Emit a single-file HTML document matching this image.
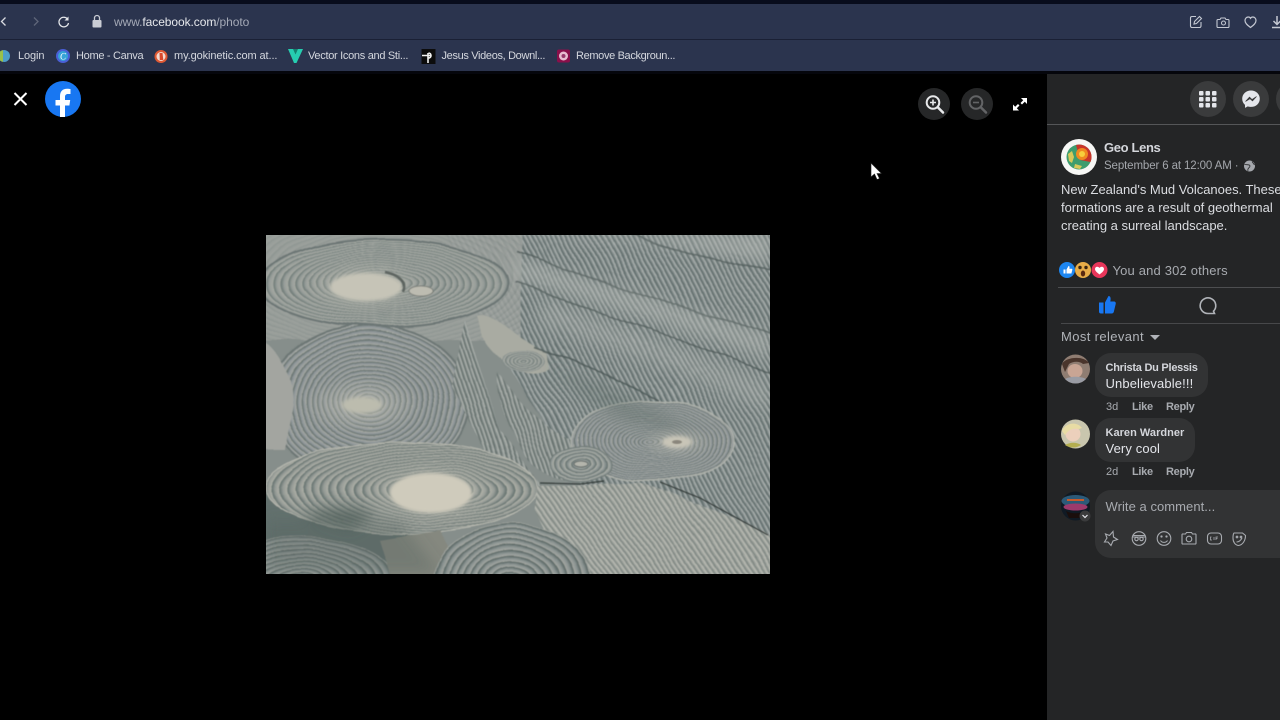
<!DOCTYPE html>
<html lang="en"><head><meta charset="utf-8"><title>Facebook photo</title>
<style>
html,body{margin:0;padding:0;background:#000;width:1280px;height:720px;overflow:hidden}
body{position:relative;font-family:"Liberation Sans",sans-serif}
#w{position:absolute;left:0;top:0;width:1280px;height:720px;overflow:hidden;filter:blur(.35px)}
.a{position:absolute;white-space:nowrap}
.t{position:absolute;white-space:nowrap;line-height:1}
svg{position:absolute;overflow:visible}
.bm{font-size:11px;color:#d4d7de;top:51px;letter-spacing:-.3px}
.bub{position:absolute;background:#323334;border-radius:16px}
</style></head><body><div id="w">

<div class="a" style="left:0;top:0;width:1280px;height:4px;background:#080c1c"></div>
<div class="a" style="left:0;top:4px;width:1280px;height:35px;background:#2b344e"></div>
<div class="a" style="left:0;top:39px;width:1280px;height:1px;background:#1a2035"></div>
<div class="a" style="left:0;top:40px;width:1280px;height:31px;background:#2b344e"></div>
<div class="a" style="left:0;top:71px;width:1280px;height:3px;background:#05060c"></div>

<svg style="left:0;top:0" width="300" height="40" fill="none">
<path d="M5.5 17.5L1.5 21.5L5.5 25.5" stroke="#d8dae0" stroke-width="1.3"/>
<path d="M34 17.5L38 21.5L34 25.5" stroke="#5f6679" stroke-width="1.3"/>
<path d="M67.5 19A4.8 4.8 0 1 0 68.5 23" stroke="#e4e6ea" stroke-width="1.3"/>
<path d="M68.5 16.5V20.5H64.5Z" fill="#e4e6ea"/>
<rect x="92.5" y="20" width="9" height="7.5" rx="1" fill="#c9ccd4"/>
<path d="M94.5 20V18a2.5 2.5 0 0 1 5 0V20" stroke="#c9ccd4" stroke-width="1.3"/>
</svg>
<div class="t" style="left:114px;top:15.5px;font-size:12px;color:#a4a9b6;letter-spacing:-.07px">www.<span style="color:#e6e8ec">facebook.com</span>/photo</div>

<svg style="left:1185px;top:12px" width="95" height="20" fill="none" stroke="#c4c8d2" stroke-width="1.1">
<path d="M11 4.5H7a1.5 1.5 0 0 0-1.500 1.500v8A1.500 1.500 0 0 0 7 15.500h7.500a1.500 1.500 0 0 0 1.500-1.500V10"/>
<path d="M9 12l.5-2.500L14.500 4.500l2 2L11.500 11.500Z"/>
<path d="M33 7.500H35l1-1.500h4l1 1.500h2a1 1 0 0 1 1 1v6a1 1 0 0 1-1 1H33a1 1 0 0 1-1-1v-6a1 1 0 0 1 1-1Z"/>
<circle cx="38.500" cy="11" r="2"/>
<path d="M65.500 15.500C62 12.800 60 11 60 8.500 60 6.500 61.500 5 63.300 5c1 0 1.800.5 2.200 1.300C66 5.500 66.800 5 67.800 5 69.600 5 71 6.500 71 8.500c0 2.500-2 4.300-5.500 7Z" stroke-width="1.200"/>
<path d="M92 4v8M88.500 9l3.500 3.500L95.500 9M87 15.500H96" stroke-width="1.500"/>
</svg>

<svg style="left:0;top:44px" width="680" height="24">
<circle cx="4" cy="12" r="6" fill="#4d9fc9"/><path d="M3 6.100a6 6 0 0 0 0 11.800Z" fill="#9ac14a"/>
<circle cx="63" cy="12" r="7" fill="#4a5fd6"/><circle cx="63" cy="12" r="5" fill="#36a3d8"/>
<text x="60" y="15.500" font-size="9" font-style="italic" fill="#fff" font-family="Liberation Serif">C</text>
<circle cx="161" cy="12.500" r="6.500" fill="#de5833"/><circle cx="161" cy="12.500" r="4.500" fill="#f3d9cf"/><path d="M159.500 9h3l.8 7h-3.500Z" fill="#d9482b"/>
<path d="M288 5H303L296.500 19H294Z" fill="#26cdb0"/><path d="M293 5H298L295.500 10.500Z" fill="#14806f"/>
<rect x="421.500" y="5" width="14" height="15" fill="#0c0c0c"/>
<path d="M422 11.500H431.500M428.500 9a2.500 2.500 0 1 1 0 5M428 9V19" stroke="#f2f2f2" stroke-width="1.600" fill="none"/>
<rect x="557" y="5.500" width="13" height="13" rx="2" fill="#8a0f4a"/><circle cx="563.500" cy="12" r="4.500" fill="#e8bcd0"/><circle cx="563.500" cy="12" r="2" fill="#96386a"/>
</svg>
<div class="t bm" style="left:18px;letter-spacing:-.1px">Login</div>
<div class="t bm" style="left:76px">Home - Canva</div>
<div class="t bm" style="left:174px;letter-spacing:-.1px">my.gokinetic.com at...</div>
<div class="t bm" style="left:308px">Vector Icons and Sti...</div>
<div class="t bm" style="left:441.500px;letter-spacing:-.34px">Jesus Videos, Downl...</div>
<div class="t bm" style="left:576px;letter-spacing:-.35px">Remove Backgroun...</div>

<svg style="left:0;top:74px" width="100" height="50" fill="none">
<path d="M14.500 19L26.500 31M26.500 19L14.500 31" stroke="#fff" stroke-width="2"/>
<circle cx="63" cy="25" r="18" fill="#1877f2"/>
<path d="M60 43V31.500H55.500V26H60V22c0-4.800 2.800-7.300 7-7.300 1.600 0 3 .2 3.500.3V20h-2.500c-2.200 0-3 1.200-3 3V26h5.200l-.8 5.500h-4.400V43Z" fill="#fff"/>
</svg>

<svg style="left:0;top:0" width="1280" height="720" fill="none">
<circle cx="934" cy="104" r="16" fill="#262728"/>
<circle cx="933" cy="102.500" r="6.300" stroke="#e8e9eb" stroke-width="2"/>
<path d="M938 107.500L943 112.500" stroke="#e8e9eb" stroke-width="2.500" stroke-linecap="round"/>
<path d="M930 102.500H936M933 99.500V105.500" stroke="#e8e9eb" stroke-width="1.600"/>
<circle cx="977" cy="104" r="16" fill="#262728"/>
<circle cx="976" cy="102.500" r="6.300" stroke="#636466" stroke-width="2"/>
<path d="M981 107.500L986 112.500" stroke="#636466" stroke-width="2.500" stroke-linecap="round"/>
<path d="M973 102.500H979" stroke="#636466" stroke-width="1.600"/>
<path d="M1021 98H1027V104L1024.800 101.800L1022 104.500L1020.500 103L1023.200 100.200Z" fill="#fff"/>
<path d="M1019 110.500H1013V104.500L1015.200 106.700L1018 104L1019.500 105.500L1016.800 108.300Z" fill="#fff"/>
</svg>

<!-- photo -->
<svg style="left:266px;top:235px;overflow:hidden" width="504" height="339" viewBox="266 235 504 339">
<defs>
<radialGradient id="r1" r=".028" spreadMethod="repeat"><stop offset="0" stop-color="#a3a7a1"/><stop offset=".45" stop-color="#979d99"/><stop offset=".75" stop-color="#7a8582"/><stop offset=".9" stop-color="#727d79"/><stop offset="1" stop-color="#b4b7ae"/></radialGradient>
<radialGradient id="r2" r=".027" spreadMethod="repeat"><stop offset="0" stop-color="#a0a4a0"/><stop offset=".45" stop-color="#90979a"/><stop offset=".75" stop-color="#707b79"/><stop offset=".9" stop-color="#687370"/><stop offset="1" stop-color="#b6b8b0"/></radialGradient>
<radialGradient id="r3" r=".045" spreadMethod="repeat"><stop offset="0" stop-color="#a0a4a0"/><stop offset=".45" stop-color="#899290"/><stop offset=".75" stop-color="#667270"/><stop offset=".9" stop-color="#5e6a67"/><stop offset="1" stop-color="#b2b5ac"/></radialGradient>
<radialGradient id="r3b" r=".09" spreadMethod="repeat"><stop offset="0" stop-color="#a4a8a3"/><stop offset=".4" stop-color="#899290"/><stop offset=".7" stop-color="#667270"/><stop offset="1" stop-color="#b6b9b0"/></radialGradient>
<radialGradient id="r4" r=".03" fx=".62" fy=".52" cx=".62" cy=".52" spreadMethod="repeat"><stop offset="0" stop-color="#aaaca4"/><stop offset=".45" stop-color="#949a95"/><stop offset=".75" stop-color="#727d7a"/><stop offset=".9" stop-color="#6a7773"/><stop offset="1" stop-color="#bcbdb3"/></radialGradient>
<radialGradient id="g"><stop offset="0" stop-color="#cfccbf" stop-opacity=".55"/><stop offset=".6" stop-color="#c4c4b8" stop-opacity=".2"/><stop offset="1" stop-color="#c4c4b8" stop-opacity="0"/></radialGradient>
<pattern id="s1" width="4.500" height="4.500" patternUnits="userSpaceOnUse" patternTransform="rotate(62)"><rect width="4.500" height="4.500" fill="#818b8a"/><rect width="4.500" height="1.200" fill="#a8aeac"/><rect y="2.500" width="4.500" height="1.300" fill="#626e6d"/></pattern>
<pattern id="s2" width="4" height="4" patternUnits="userSpaceOnUse" patternTransform="rotate(72)"><rect width="4" height="4" fill="#858e8c"/><rect width="4" height="1.200" fill="#abb0ab"/><rect y="2.300" width="4" height="1.100" fill="#646f6b"/></pattern>
<pattern id="s3" width="3.500" height="4.500" patternUnits="userSpaceOnUse" patternTransform="rotate(55)"><rect width="3.500" height="4.500" fill="#9ca19b"/><rect width="3.500" height="1.300" fill="#b6b8b0"/><rect y="2.600" width="3.500" height="1.100" fill="#7c8480"/></pattern>
<filter id="wp" filterUnits="userSpaceOnUse" x="236" y="205" width="564" height="399"><feTurbulence type="fractalNoise" baseFrequency=".018" numOctaves="2" seed="4" result="n"/><feDisplacementMap in="SourceGraphic" in2="n" scale="8" xChannelSelector="R" yChannelSelector="G"/><feGaussianBlur stdDeviation=".5"/></filter>
<filter id="b1" x="-10%" y="-10%" width="120%" height="120%"><feGaussianBlur stdDeviation=".5"/></filter>
<filter id="b2" x="-30%" y="-30%" width="160%" height="160%"><feGaussianBlur stdDeviation="1.500"/></filter>
<filter id="b5" x="-30%" y="-30%" width="160%" height="160%"><feGaussianBlur stdDeviation="7"/></filter>
</defs>
<rect x="266" y="235" width="504" height="339" fill="#868e8b"/>
<g filter="url(#wp)">
<path d="M440 215H800V604H660L560 450L475 310Z" fill="url(#s1)"/>
<path d="M246 215H520L520 340H246Z" fill="url(#r1)" opacity=".6"/>
<rect x="246" y="215" width="274" height="125" fill="#a0a4a0" opacity=".55"/>
<ellipse cx="370" cy="402" rx="100" ry="78" fill="url(#r2)" stroke="#6d7775" stroke-width="2"/>
<path d="M246 330C276 340 297 375 291 410L286 450L246 450Z" fill="#a3a5a0"/>
<ellipse cx="384" cy="283" rx="124" ry="44" fill="url(#r1)" stroke="#6c7674" stroke-width="2"/>
<path d="M246 480L420 535L480 604H246Z" fill="#64716e"/>
<ellipse cx="300" cy="580" rx="95" ry="42" fill="url(#r3)"/>
<path d="M466 320L500 430L545 490L505 490L452 385Z" fill="url(#s2)"/>
<path d="M478 316C490 310 510 335 548 352L550 368C525 380 495 360 482 335Z" fill="#a9aba2"/>
<path d="M497 372C520 400 545 440 600 450L608 475C565 488 535 475 522 450C505 420 495 395 497 372Z" fill="url(#s2)"/>
<path d="M733 440L800 470V550L700 492L650 482Z" fill="url(#s1)"/>
<ellipse cx="652" cy="441" rx="82" ry="40" fill="url(#r2)" stroke="#b4b7af"/>
<ellipse cx="581" cy="464" rx="30" ry="17" fill="url(#r3b)" stroke="#717b78"/>
<ellipse cx="524" cy="360" rx="22" ry="10" fill="url(#r3b)" opacity=".85"/>
<ellipse cx="402" cy="488" rx="136" ry="46" fill="url(#r4)" stroke="#b8b9b0"/>
<path d="M380 540L440 530L480 604H400Z" fill="#85887f"/>
<path d="M538 486L637 482L677 495L800 550V604H593L545 530L535 510Z" fill="url(#s3)"/>
<ellipse cx="512" cy="580" rx="78" ry="56" fill="url(#r3)"/>
<g stroke="#4a5655" stroke-width="1.800" fill="none" opacity=".75">
<path d="M515 252C575 273 662 300 790 340"/>
<path d="M515 283C582 307 665 333 790 380"/>
<path d="M625 230C675 253 720 262 790 272"/>
<path d="M535 347C582 363 620 380 660 400"/>
</g>
</g>
<g filter="url(#b5)">
<path d="M480 235H770V262L640 240Z" fill="#b8bcb8" opacity=".5"/>
<path d="M515 258L660 300L770 335L770 358L660 322L515 278Z" fill="#b6bab6" opacity=".45"/>
<path d="M540 300L660 340L770 385L770 410L660 365L540 325Z" fill="#b6bab6" opacity=".3"/>
<path d="M300 515C330 505 360 505 375 515L350 530Z" fill="#4a5855" opacity=".7"/>
<path d="M266 520H400L440 574H266Z" fill="#55645f" opacity=".35"/>
<path d="M545 365L660 410L700 440L620 420Z" fill="#55625f" opacity=".3"/>
</g>
<ellipse cx="365" cy="287" rx="62" ry="28" fill="url(#g)"/>
<ellipse cx="362" cy="405" rx="62" ry="30" fill="url(#g)"/>
<ellipse cx="430" cy="493" rx="72" ry="34" fill="url(#g)"/>
<ellipse cx="677" cy="442" rx="38" ry="17" fill="url(#g)"/>
<g filter="url(#b2)">
<ellipse cx="366" cy="287" rx="36" ry="14" fill="#c6c4b7"/>
<ellipse cx="362" cy="405" rx="20" ry="8" fill="#bcbcae"/>
<ellipse cx="431" cy="493" rx="41" ry="20" fill="#cfcbbc"/>
<ellipse cx="677" cy="442" rx="15" ry="6" fill="#c8c5b7"/>
</g>
<path d="M385 272C400 275 407 283 403 292" stroke="#4f5653" stroke-width="2.500" fill="none" opacity=".8" filter="url(#b1)"/>
<ellipse cx="421" cy="291" rx="12" ry="5" fill="#bdbcb1" stroke="#7b7f79" filter="url(#b1)"/>
<path d="M540 483L580 484L604 481M660 482L700 498L768 535" stroke="#333a39" stroke-width="1.200" fill="none" filter="url(#b1)"/>
<ellipse cx="677" cy="442" rx="5" ry="2" fill="#8a867b" filter="url(#b1)"/>
<ellipse cx="581" cy="464" rx="7" ry="3" fill="#b4b5ac" stroke="#5e6866" filter="url(#b1)"/>
</svg>

<!-- cursor -->
<svg style="left:870px;top:162px" width="14" height="20"><path d="M1 1V15L4.500 12L7 17.500L9.500 16.500L7 11.500H11.500Z" fill="#fff" stroke="#222" stroke-width=".6"/></svg>

<!-- panel -->
<div class="a" style="left:1047px;top:74px;width:233px;height:646px;background:#242526;overflow:hidden">
<div class="a" style="left:0;top:50px;width:233px;height:1px;background:#555658"></div>
<div class="a" style="left:11px;top:212.500px;width:222px;height:1px;background:#4d4e50"></div>
<div class="a" style="left:14px;top:249px;width:219px;height:1px;background:#47484a"></div>
<div class="a" style="left:143px;top:7px;width:36px;height:36px;border-radius:50%;background:#3a3b3c"></div>
<div class="a" style="left:186px;top:7px;width:36px;height:36px;border-radius:50%;background:#3a3b3c"></div>
<div class="a" style="left:229px;top:7px;width:36px;height:36px;border-radius:50%;background:#3a3b3c"></div>
<svg style="left:0;top:0" width="233" height="646" fill="none">
<g fill="#e4e6eb"><rect x="152" y="17" width="4.500" height="4.500" rx="1"/><rect x="158.500" y="17" width="4.500" height="4.500" rx="1"/><rect x="165" y="17" width="4.500" height="4.500" rx="1"/><rect x="152" y="23" width="4.500" height="4.500" rx="1"/><rect x="158.500" y="23" width="4.500" height="4.500" rx="1"/><rect x="165" y="23" width="4.500" height="4.500" rx="1"/><rect x="152" y="29" width="4.500" height="4.500" rx="1"/><rect x="158.500" y="29" width="4.500" height="4.500" rx="1"/><rect x="165" y="29" width="4.500" height="4.500" rx="1"/></g>
<path d="M204 16.500c-5 0-8.800 3.600-8.800 8.300 0 2.500 1 4.600 2.800 6.100v3l2.800-1.500c1 .3 2 .5 3.200.5 5 0 8.800-3.600 8.800-8.200S209 16.500 204 16.500Z" fill="#e4e6eb"/>
<path d="M198.500 27.500L202.500 23L205 25.500L209.500 22.500L205.500 27L203 24.800Z" fill="#3a3b3c" stroke="#3a3b3c" stroke-width=".6"/>

<circle cx="32" cy="83" r="18" fill="#f7f7f5"/>
<circle cx="32" cy="83" r="12.500" fill="#3e9d6e"/>
<path d="M32 70.500a12.500 12.500 0 0 1 11.500 17.500L33 86L29 71Z" fill="#c8352a"/>
<circle cx="35" cy="80" r="6" fill="#f08a20"/><circle cx="35" cy="80" r="3" fill="#f7d03c"/>
<path d="M21 80l4-3 2 6-2 6-3-2ZM28 90l7 2-2 3-6-1Z" fill="#d8c95a"/>

<circle cx="202.500" cy="92" r="5.500" fill="#a4a7ac"/>
<path d="M197.500 90.500C200 91 203 90 203 92S200 93.500 201 97M205 87.500L207.500 91" stroke="#242526" stroke-width=".8"/>

<circle cx="20" cy="196" r="8" fill="#1d86f0"/>
<path d="M16.500 195.500h2v4h-2ZM19.500 199.500v-4l2-3.500c1 0 1.300 1 .9 2.700h2.200c.8 0 .9.800.6 1.500l-.8 3.300Z" fill="#fff"/>
<circle cx="36" cy="196" r="8" fill="#e8ad48"/>
<circle cx="33" cy="193.500" r="1.700" fill="#3a2410"/><circle cx="39" cy="193.500" r="1.700" fill="#3a2410"/><ellipse cx="36" cy="199.500" rx="2.200" ry="3" fill="#5a2a10"/>
<circle cx="52.500" cy="196" r="8" fill="#e8365a"/>
<path d="M52.500 200.500c-3-2.300-4.500-3.700-4.500-5.500 0-1.300 1-2.300 2.200-2.300.9 0 1.800.5 2.300 1.300.5-.8 1.400-1.300 2.300-1.300 1.200 0 2.200 1 2.200 2.300 0 1.800-1.500 3.200-4.500 5.500Z" fill="#fff"/>

<g transform="translate(0,2.500)"><path d="M52 226h4.500v11H54a2 2 0 0 1-2-2ZM58 237V226l3.500-6.500c2 0 2.600 2 1.800 5.500h3.700c1.500 0 2 1.200 1.700 2.500l-1.800 7.500c-.3 1.200-1 2-2.300 2Z" fill="#1877f2"/></g>
<path d="M161 239.500a7.800 7.800 0 1 1 5.500-2.300L167.500 239.500Z" stroke="#b0b3b8" stroke-width="1.600"/>
<path d="M103 261L108 266L113 261Z" fill="#b0b3b8"/>

<circle cx="28.500" cy="295" r="14.500" fill="#8f7d72"/>
<path d="M15 290c3-7 22-9 27-1l-6 1c-3-3-10-3-14 0l-4 8Z" fill="#4a352c"/>
<ellipse cx="28" cy="297" rx="7.500" ry="7" fill="#c9a594"/><path d="M18 305c5-3 16-3 21 0a14.500 14.500 0 0 1-21 0Z" fill="#9a9ca4"/>
<circle cx="28.500" cy="360" r="14.500" fill="#c9c6ae"/>
<circle cx="26" cy="360" r="7.500" fill="#ecd0bc"/><path d="M15 357c2-7 14-11 20-3l-3 1c-5-1-10 0-14 6Z" fill="#e8dca4"/><path d="M18 371c5-3 12-3 16 0a14 14 0 0 1-16 0Z" fill="#b4ae50"/>
<circle cx="28.500" cy="432" r="14.500" fill="#101a24"/>
<ellipse cx="28.500" cy="427" rx="14" ry="6" fill="#2c5a78"/>
<ellipse cx="28.500" cy="433" rx="12" ry="3.500" fill="#9c3a6c"/>
<path d="M19 437c5 3 14 3 19 0l-3 7H22Z" fill="#1a0e0c"/><path d="M20 426h17" stroke="#c85a2a" stroke-width="2"/>
<circle cx="38" cy="442" r="5.500" fill="#3a3b3c"/><path d="M35.500 441L38 443.500L40.500 441" stroke="#e4e6eb" stroke-width="1.200"/>
</svg>

<div class="t" style="left:57px;top:67px;font-size:13px;font-weight:bold;color:#d4d6db;letter-spacing:-.35px">Geo Lens</div>
<div class="t" style="left:57px;top:86.500px;font-size:11.500px;color:#a4a7ac;letter-spacing:-.12px">September 6 at 12:00 AM ·</div>
<div class="t" style="left:14px;top:108.500px;font-size:13px;color:#dbdde1;letter-spacing:-.02px">New Zealand's Mud Volcanoes. These</div>
<div class="t" style="left:14px;top:126.500px;font-size:13px;color:#dbdde1;letter-spacing:-.02px">formations are a result of geothermal</div>
<div class="t" style="left:14px;top:144.500px;font-size:13px;color:#dbdde1;letter-spacing:-.02px">creating a surreal landscape.</div>
<div class="t" style="left:65.500px;top:189.500px;font-size:13px;color:#a8abb0;letter-spacing:.17px">You and 302 others</div>
<div class="t" style="left:14px;top:256px;font-size:13px;color:#b0b3b8;letter-spacing:.38px">Most relevant</div>

<div class="bub" style="left:48px;top:279px;width:113px;height:44px"></div>
<div class="t" style="left:58.500px;top:288.500px;font-size:11px;font-weight:bold;color:#d4d6db;letter-spacing:-.25px">Christa Du Plessis</div>
<div class="t" style="left:58.500px;top:302.500px;font-size:13px;color:#e4e6eb;letter-spacing:.12px">Unbelievable!!!</div>
<div class="t" style="left:59px;top:328px;font-size:11px;color:#a8abb0">3d</div>
<div class="t" style="left:85px;top:328px;font-size:11px;font-weight:bold;color:#a8abb0;letter-spacing:-.3px">Like</div>
<div class="t" style="left:119px;top:328px;font-size:11px;font-weight:bold;color:#a8abb0;letter-spacing:-.3px">Reply</div>

<div class="bub" style="left:48px;top:344px;width:100px;height:44px"></div>
<div class="t" style="left:58.500px;top:353.500px;font-size:11px;font-weight:bold;color:#d4d6db;letter-spacing:.03px">Karen Wardner</div>
<div class="t" style="left:58.500px;top:367.500px;font-size:13px;color:#e4e6eb;letter-spacing:.12px">Very cool</div>
<div class="t" style="left:59px;top:393px;font-size:11px;color:#a8abb0">2d</div>
<div class="t" style="left:85px;top:393px;font-size:11px;font-weight:bold;color:#a8abb0;letter-spacing:-.3px">Like</div>
<div class="t" style="left:119px;top:393px;font-size:11px;font-weight:bold;color:#a8abb0;letter-spacing:-.3px">Reply</div>

<div class="bub" style="left:48px;top:416px;width:200px;height:68px"></div>
<div class="t" style="left:58.500px;top:426px;font-size:13px;color:#a8abb0;letter-spacing:.05px">Write a comment...</div>
<svg style="left:48px;top:450px" width="170" height="30" fill="none" stroke="#a8abb0" stroke-width="1.100">
<path d="M18 7.500L18.500 13L22.500 15.500L18 17L16 21.500L13 18H9.500L12 14L10.500 10L14.500 11.500Z"/>
<circle cx="44" cy="14.500" r="6.800"/><path d="M37.500 13H50.500M38.500 11.500h11"/><circle cx="41.500" cy="15" r="1.700"/><circle cx="46.500" cy="15" r="1.700"/>
<circle cx="69" cy="14.500" r="6.800"/><circle cx="66.500" cy="12.500" r=".6"/><circle cx="71.500" cy="12.500" r=".6"/><path d="M65.500 16.500C67 19 71 19 72.500 16.500"/>
<path d="M88 10H90.500L91.500 8.500H96.500L97.500 10H100a.8.800 0 0 1 1 1v8a.8.800 0 0 1-1 1H88a.8.800 0 0 1-1-1v-8a.8.800 0 0 1 1-1Z"/><circle cx="94" cy="15" r="2.800"/>
<rect x="112.500" y="9" width="14" height="11" rx="3.500"/><path d="M116.500 13h-1v3h1.500M119 13v3M121 16v-3h2M121 14.500h1.500" stroke-width=".8"/>
<path d="M139 9H147.500L150.500 11.500C150.500 16 148 21 143.500 21.500C140 21 138 18 138 14C138 12 138 10 139 9Z"/><circle cx="142" cy="13" r=".8"/><circle cx="146" cy="13" r=".8"/><path d="M141.500 18C144 18 146 16 147 14"/>
</svg>
</div>
</div></body></html>
